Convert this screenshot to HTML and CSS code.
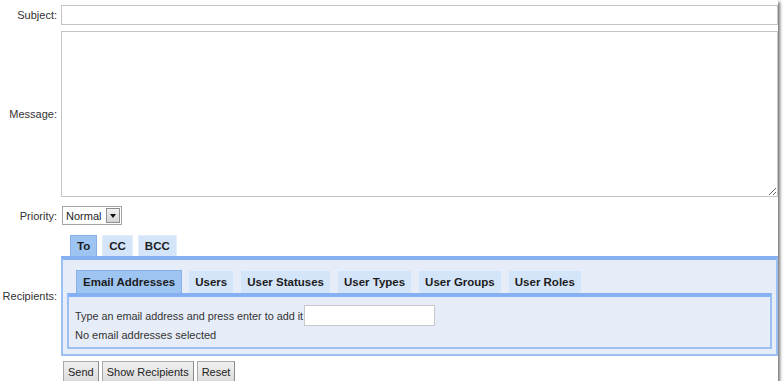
FILE: index.html
```html
<!DOCTYPE html>
<html lang="en">
<head>
    <meta charset="UTF-8">
    <title>Send Message</title>
    <link rel="stylesheet" href="styles.css">
</head>
<body>
    <div class="window">
        <form class="compose">
            <div class="form-row row-subject">
                <label class="field-label" for="subject">Subject:</label>
                <div class="field">
                    <input class="text-input" id="subject" type="text">
                </div>
            </div>

            <div class="form-row row-message">
                <label class="field-label" for="message">Message:</label>
                <div class="field">
                    <textarea class="message" id="message"></textarea>
                </div>
            </div>

            <div class="form-row row-priority">
                <label class="field-label">Priority:</label>
                <div class="field">
                    <div class="select">
                        <span class="select-value">Normal</span>
                        <span class="select-btn"><span class="arrow"></span></span>
                    </div>
                </div>
            </div>

            <div class="form-row row-recipients">
                <label class="field-label">Recipients:</label>
                <div class="field">
                    <ul class="tabs">
                        <li class="tab active">To</li>
                        <li class="tab">CC</li>
                        <li class="tab">BCC</li>
                    </ul>
                    <div class="panel">
                        <ul class="tabs inner-tabs">
                            <li class="tab active">Email Addresses</li>
                            <li class="tab">Users</li>
                            <li class="tab">User Statuses</li>
                            <li class="tab">User Types</li>
                            <li class="tab">User Groups</li>
                            <li class="tab">User Roles</li>
                        </ul>
                        <div class="panel inner-panel">
                            <div class="add-line">
                                Type an email address and press enter to add it
                                <input class="text-input email-input" type="text">
                            </div>
                            <div class="none-selected">No email addresses selected</div>
                        </div>
                    </div>
                </div>
            </div>

            <div class="form-row row-buttons">
                <span class="field-label"></span>
                <div class="field buttons">
                    <button type="button" class="btn">Send</button>
                    <button type="button" class="btn">Show Recipients</button>
                    <button type="button" class="btn">Reset</button>
                </div>
            </div>
        </form>
    </div>
</body>
</html>
```

FILE: styles.css
```css
body {
    margin: 0;
    background: #ffffff;
    font-family: "Liberation Sans", Arial, sans-serif;
    font-size: 11px;
    color: #333333;
}

.window {
    width: 778px;
    height: 381px;
    overflow: hidden;
    background: #ffffff;
    box-shadow: 2px 2px 3px rgba(0, 0, 0, 0.55);
}

.compose {
    padding-top: 5px;
}

.form-row {
    display: flex;
    align-items: center;
    gap: 4px;
}

.field-label {
    flex: 0 0 57px;
    text-align: right;
}

.field {
    flex: 1;
    min-width: 0;
}

.row-message { margin-top: 6px; }
.row-priority { margin-top: 9px; }
.row-recipients { margin-top: 10px; }
.row-buttons { margin-top: 5px; }

.text-input {
    display: block;
    box-sizing: border-box;
    width: 100%;
    height: 20px;
    margin: 0;
    border: 1px solid #c4c4c4;
    background: #ffffff;
    font: inherit;
}

.message {
    display: block;
    box-sizing: border-box;
    width: 100%;
    height: 166px;
    margin: 0;
    border: 1px solid #c4c4c4;
    font: inherit;
}

.select {
    display: flex;
    align-items: center;
    box-sizing: border-box;
    width: 60px;
    height: 19px;
    margin-left: 1px;
    padding: 0 1px 0 3px;
    border: 1px solid #a5a5a5;
    background: #ffffff;
    color: #222222;
}

.select-value {
    flex: 1;
}

.select-btn {
    display: flex;
    align-items: center;
    justify-content: center;
    box-sizing: border-box;
    width: 14px;
    height: 15px;
    border: 1px solid #8e8e8e;
    background: linear-gradient(#f2f2f2, #d4d4d4);
}

.arrow {
    width: 0;
    height: 0;
    border-left: 3px solid transparent;
    border-right: 3px solid transparent;
    border-top: 4px solid #111111;
}

.tabs {
    display: flex;
    gap: 5px;
    margin: 0;
    padding: 0 0 0 9px;
    list-style: none;
}

.tab {
    box-sizing: border-box;
    height: 21px;
    padding: 0 6px;
    line-height: 20px;
    font-weight: bold;
    font-size: 11.5px;
    color: #1c1c1c;
    background: #d5e5f9;
    border: 1px solid #e4eefb;
    border-bottom: 0;
}

.tab.active {
    background: #9ec4f2;
    border-color: #86b0e6;
}

.panel {
    background: #e7edf8;
    border: 2px solid #9cc0f2;
    border-top: 4px solid #85b0f3;
    padding: 10px 4px 5px;
}

.inner-tabs {
    gap: 6px;
    padding-left: 9px;
}

.inner-tabs .tab {
    height: 23px;
    line-height: 22px;
}

.inner-panel {
    border-width: 2px;
    border-top-width: 4px;
    padding: 8px 6px 6px;
}

.add-line {
    display: flex;
    align-items: center;
    gap: 1px;
    font-size: 10.8px;
}

.email-input {
    width: 131px;
    height: 21px;
    border-color: #c8c8c8;
}

.none-selected {
    margin-top: 3px;
}

.buttons {
    display: flex;
    gap: 3px;
    padding-left: 2px;
}

.btn {
    height: 21px;
    padding: 0 4px;
    font: inherit;
    font-size: 11px;
    color: #222222;
    background: linear-gradient(#f0f0f0, #dcdcdc);
    border: 1px solid #a8a8a8;
    border-right-color: #8a8a8a;
    border-bottom-color: #8a8a8a;
    border-radius: 0;
}
```
